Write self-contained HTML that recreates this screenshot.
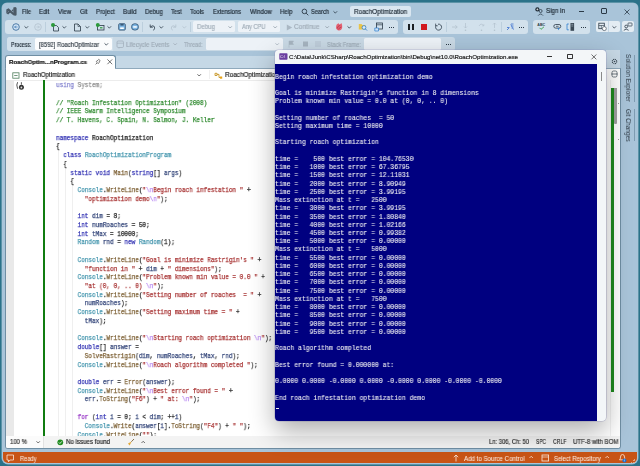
<!DOCTYPE html>
<html><head><meta charset="utf-8">
<style>
*{margin:0;padding:0;box-sizing:border-box}
html,body{width:640px;height:466px;overflow:hidden;background:#2b7289;font-family:"Liberation Sans",sans-serif}
.a{position:absolute}
.t{white-space:pre}
pre,.t{will-change:transform}
.t{-webkit-text-stroke:0.18px currentColor}
svg.a{overflow:visible}
.cl{white-space:pre;will-change:transform;-webkit-text-stroke:0.25px currentColor}
.kl{white-space:pre;will-change:transform;-webkit-text-stroke:0.08px currentColor}
</style></head><body>
<div class="a" style="left:1.8px;top:2.8px;width:636.4px;height:461px;background:#a9c4d9;border-radius:5px 5px 6px 6px;box-shadow:0 0 0 0.5px #8db3c6;"></div>
<svg class="a" style="left:5.6px;top:7px;" width="11" height="9" viewBox="0 0 11 9"><g fill="#4b5966"><path d="M7.3 0.6 L9.2 0 Q10.6 0.2 10.6 1.4 V7.4 Q10.6 8.6 9.2 8.8 L7.3 8.2Z"/><path d="M0.3 2.6 L2.6 1.3 L8.6 6.8 L7.3 8.2Z"/><path d="M0.3 6.2 L2.2 7.4 L5 4.8 L3.8 3.7Z"/><path d="M0.3 2.6 L2.2 3.6 V5.3 L0.3 6.2Z"/><path d="M5.6 3.4 L7.3 1.8 V3.9 L6.7 4.4Z"/></g></svg>
<div class="a t" style="left:22.00px;top:8.81px;font-size:6.6px;line-height:6.6px;color:#1e2a35;font-weight:normal;letter-spacing:0px;font-family:'Liberation Sans',sans-serif;transform:scaleX(0.8464533604198409);transform-origin:0 0;">File</div>
<div class="a t" style="left:39.40px;top:8.81px;font-size:6.6px;line-height:6.6px;color:#1e2a35;font-weight:normal;letter-spacing:0px;font-family:'Liberation Sans',sans-serif;transform:scaleX(0.9057493096959148);transform-origin:0 0;">Edit</div>
<div class="a t" style="left:58.20px;top:8.81px;font-size:6.6px;line-height:6.6px;color:#1e2a35;font-weight:normal;letter-spacing:0px;font-family:'Liberation Sans',sans-serif;transform:scaleX(0.9223273628478085);transform-origin:0 0;">View</div>
<div class="a t" style="left:79.70px;top:8.81px;font-size:6.6px;line-height:6.6px;color:#1e2a35;font-weight:normal;letter-spacing:0px;font-family:'Liberation Sans',sans-serif;transform:scaleX(0.889173424384692);transform-origin:0 0;">Git</div>
<div class="a t" style="left:95.70px;top:8.81px;font-size:6.6px;line-height:6.6px;color:#1e2a35;font-weight:normal;letter-spacing:0px;font-family:'Liberation Sans',sans-serif;transform:scaleX(0.9153228947573419);transform-origin:0 0;">Project</div>
<div class="a t" style="left:122.50px;top:8.81px;font-size:6.6px;line-height:6.6px;color:#1e2a35;font-weight:normal;letter-spacing:0px;font-family:'Liberation Sans',sans-serif;transform:scaleX(0.9197187704381949);transform-origin:0 0;">Build</div>
<div class="a t" style="left:145.00px;top:8.81px;font-size:6.6px;line-height:6.6px;color:#1e2a35;font-weight:normal;letter-spacing:0px;font-family:'Liberation Sans',sans-serif;transform:scaleX(0.9202990200614907);transform-origin:0 0;">Debug</div>
<div class="a t" style="left:171.30px;top:8.81px;font-size:6.6px;line-height:6.6px;color:#1e2a35;font-weight:normal;letter-spacing:0px;font-family:'Liberation Sans',sans-serif;transform:scaleX(0.8839760748157686);transform-origin:0 0;">Test</div>
<div class="a t" style="left:190.00px;top:8.81px;font-size:6.6px;line-height:6.6px;color:#1e2a35;font-weight:normal;letter-spacing:0px;font-family:'Liberation Sans',sans-serif;transform:scaleX(0.9088312430214744);transform-origin:0 0;">Tools</div>
<div class="a t" style="left:212.90px;top:8.81px;font-size:6.6px;line-height:6.6px;color:#1e2a35;font-weight:normal;letter-spacing:0px;font-family:'Liberation Sans',sans-serif;transform:scaleX(0.8672167298495999);transform-origin:0 0;">Extensions</div>
<div class="a t" style="left:249.90px;top:8.81px;font-size:6.6px;line-height:6.6px;color:#1e2a35;font-weight:normal;letter-spacing:0px;font-family:'Liberation Sans',sans-serif;transform:scaleX(0.9280781969739534);transform-origin:0 0;">Window</div>
<div class="a t" style="left:280.00px;top:8.81px;font-size:6.6px;line-height:6.6px;color:#1e2a35;font-weight:normal;letter-spacing:0px;font-family:'Liberation Sans',sans-serif;transform:scaleX(0.9207289226735023);transform-origin:0 0;">Help</div>
<svg class="a" style="left:301px;top:8px;" width="8" height="8" viewBox="0 0 8 8"><circle cx="3.4" cy="3.4" r="2.3" fill="none" stroke="#2b3a47" stroke-width="0.9"/><path d="M5.1 5.1 L7.3 7.3" stroke="#2b3a47" stroke-width="0.9"/></svg>
<div class="a t" style="left:311.00px;top:8.81px;font-size:6.6px;line-height:6.6px;color:#1e2a35;font-weight:normal;letter-spacing:0px;font-family:'Liberation Sans',sans-serif;transform:scaleX(0.8608815426997245);transform-origin:0 0;">Search</div>
<svg class="a" style="left:333.0px;top:10.7px;" width="4.6" height="2.8" viewBox="0 0 4.6 2.8"><path d="M0.5 0.3 L2.3 2.1 L4.1 0.3" fill="none" stroke="#2b3a47" stroke-width="0.8"/></svg>
<div class="a" style="left:350px;top:6px;width:61px;height:11px;background:#d9e6f0;border-radius:2px;"></div>
<div class="a t" style="left:353.80px;top:8.51px;font-size:6.6px;line-height:6.6px;color:#1e2a35;font-weight:normal;letter-spacing:0px;font-family:'Liberation Sans',sans-serif;transform:scaleX(0.9541437098255281);transform-origin:0 0;">RoachOptimization</div>
<svg class="a" style="left:535px;top:7px;" width="10" height="9" viewBox="0 0 10 9"><circle cx="2.4" cy="2.4" r="2.1" fill="#1e2a35"/><path d="M1.4 2.4 H3.4 M2.4 1.4 V3.4" stroke="#fff" stroke-width="0.6"/><circle cx="5.6" cy="4" r="1.5" fill="none" stroke="#2b3a47" stroke-width="0.8"/><path d="M3.2 8.6 Q5.6 5.4 8 8.6" fill="none" stroke="#2b3a47" stroke-width="0.8"/></svg>
<div class="a t" style="left:545.90px;top:8.21px;font-size:6.6px;line-height:6.6px;color:#1e2a35;font-weight:normal;letter-spacing:0px;font-family:'Liberation Sans',sans-serif;transform:scaleX(0.9413956438155262);transform-origin:0 0;">Sign in</div>
<div class="a" style="left:578.5px;top:10.6px;width:5.5px;height:0.8px;background:#2b3a47;"></div>
<div class="a" style="left:601px;top:8px;width:6px;height:6px;background:transparent;border:0.8px solid #2b3a47;border-radius:1px;"></div>
<svg class="a" style="left:623.5px;top:8.5px;" width="6" height="6" viewBox="0 0 6 6"><path d="M0.5 0.5 L5.5 5.5 M5.5 0.5 L0.5 5.5" stroke="#2b3a47" stroke-width="0.8"/></svg>
<div class="a" style="left:5px;top:19.5px;width:393px;height:14.5px;background:#d2e1ec;border-radius:3px;"></div>
<div class="a" style="left:403px;top:19.5px;width:125px;height:14.5px;background:#d2e1ec;border-radius:3px;"></div>
<div class="a" style="left:533px;top:19.5px;width:57px;height:14.5px;background:#d2e1ec;border-radius:3px;"></div>
<div class="a" style="left:596px;top:21px;width:24px;height:11px;background:#e3ecf3;border-radius:2px;"></div>
<div class="a" style="left:608px;top:21px;width:0.6px;height:11px;background:#c5d6e3;"></div>
<div class="a" style="left:622px;top:21px;width:11.5px;height:11px;background:#e3ecf3;border-radius:2px;"></div>
<svg class="a" style="left:11.5px;top:22.5px;" width="8" height="8" viewBox="0 0 8 8"><circle cx="4" cy="4" r="3.3" fill="#d4e6f6" stroke="#3f6f9f" stroke-width="0.9"/><path d="M5.6 4 H2.6 M3.9 2.7 L2.6 4 L3.9 5.3" fill="none" stroke="#2f6fb0" stroke-width="0.7"/></svg>
<svg class="a" style="left:23.5px;top:25.5px;" width="4.6" height="2.8" viewBox="0 0 4.6 2.8"><path d="M0.5 0.3 L2.3 2.1 L4.1 0.3" fill="none" stroke="#2b3a47" stroke-width="0.8"/></svg>
<svg class="a" style="left:33.5px;top:22.5px;" width="8" height="8" viewBox="0 0 8 8"><circle cx="4" cy="4" r="3.3" fill="none" stroke="#b3c2ce" stroke-width="0.8"/><path d="M2.4 4 H5.4 M4.1 2.7 L5.4 4 L4.1 5.3" fill="none" stroke="#b3c2ce" stroke-width="0.7"/></svg>
<div class="a" style="left:45.3px;top:22px;width:0.6px;height:9.5px;background:#bccfdd;"></div>
<svg class="a" style="left:49.5px;top:22px;" width="10" height="10" viewBox="0 0 10 10"><path d="M3.5 3.5 H6.5 L8.5 5.5 V9 H3.5Z" fill="none" stroke="#2b3a47" stroke-width="0.8"/><circle cx="3" cy="3" r="2" fill="#2c9a3c"/></svg>
<svg class="a" style="left:61.5px;top:25.5px;" width="4.6" height="2.8" viewBox="0 0 4.6 2.8"><path d="M0.5 0.3 L2.3 2.1 L4.1 0.3" fill="none" stroke="#2b3a47" stroke-width="0.8"/></svg>
<svg class="a" style="left:72.5px;top:22px;" width="9" height="10" viewBox="0 0 9 10"><path d="M1.5 2 H5 L7.5 4.5 V9 H1.5Z" fill="none" stroke="#2b3a47" stroke-width="0.8"/><path d="M5 2 V4.5 H7.5" fill="none" stroke="#2b3a47" stroke-width="0.6"/></svg>
<svg class="a" style="left:84.5px;top:25.5px;" width="4.6" height="2.8" viewBox="0 0 4.6 2.8"><path d="M0.5 0.3 L2.3 2.1 L4.1 0.3" fill="none" stroke="#2b3a47" stroke-width="0.8"/></svg>
<svg class="a" style="left:94.5px;top:22px;" width="10" height="9" viewBox="0 0 10 9"><rect x="2.5" y="3.5" width="6.5" height="4.5" fill="none" stroke="#2b3a47" stroke-width="0.8"/><circle cx="2.8" cy="3" r="2" fill="#2c9a3c"/><rect x="5" y="5.2" width="2.5" height="1.2" fill="#2c9a3c"/></svg>
<svg class="a" style="left:107.0px;top:25.5px;" width="4.6" height="2.8" viewBox="0 0 4.6 2.8"><path d="M0.5 0.3 L2.3 2.1 L4.1 0.3" fill="none" stroke="#2b3a47" stroke-width="0.8"/></svg>
<svg class="a" style="left:117.5px;top:23px;" width="8" height="8" viewBox="0 0 8 8"><rect x="0.7" y="0.7" width="6.6" height="6.4" rx="1" fill="#7fb8e6" stroke="#3a5a78" stroke-width="0.9"/><rect x="2.2" y="4.4" width="3.6" height="1.6" fill="#ffffff"/><rect x="2.4" y="1" width="3.2" height="1.6" fill="#3a5a78"/></svg>
<svg class="a" style="left:130.5px;top:23px;" width="8" height="8" viewBox="0 0 8 8"><rect x="0.6" y="0.8" width="6.8" height="6.2" rx="2.8" fill="#7fb8e6" stroke="#3a5a78" stroke-width="0.9"/><rect x="2.2" y="3.2" width="3.6" height="1.5" fill="#ffffff"/></svg>
<div class="a" style="left:142.3px;top:22px;width:0.6px;height:9.5px;background:#bccfdd;"></div>
<svg class="a" style="left:147.5px;top:22.5px;" width="8" height="8" viewBox="0 0 8 8"><path d="M2.2 1.5 V4.2 H4.9" fill="none" stroke="#2b3a47" stroke-width="0.8"/><path d="M2.4 4 Q4.5 1.8 6.2 3.4 Q7.5 5 5.5 7.4" fill="none" stroke="#2b3a47" stroke-width="0.8"/></svg>
<svg class="a" style="left:159.0px;top:25.5px;" width="4.6" height="2.8" viewBox="0 0 4.6 2.8"><path d="M0.5 0.3 L2.3 2.1 L4.1 0.3" fill="none" stroke="#2b3a47" stroke-width="0.8"/></svg>
<svg class="a" style="left:169.5px;top:22.5px;" width="8" height="8" viewBox="0 0 8 8"><path d="M5.8 1.5 V4.2 H3.1" fill="none" stroke="#b3c2ce" stroke-width="0.8"/><path d="M5.6 4 Q3.5 1.8 1.8 3.4 Q0.5 5 2.5 7.4" fill="none" stroke="#b3c2ce" stroke-width="0.8"/></svg>
<svg class="a" style="left:181.5px;top:25.5px;" width="4.6" height="2.8" viewBox="0 0 4.6 2.8"><path d="M0.5 0.3 L2.3 2.1 L4.1 0.3" fill="none" stroke="#b3c2ce" stroke-width="0.8"/></svg>
<div class="a" style="left:189.5px;top:22px;width:0.6px;height:9.5px;background:#bccfdd;"></div>
<div class="a" style="left:193px;top:20.5px;width:42px;height:11.3px;background:#edf2f7;border-radius:1.5px;"></div>
<div class="a t" style="left:197.00px;top:23.91px;font-size:6.6px;line-height:6.6px;color:#a1adb8;font-weight:normal;letter-spacing:0px;font-family:'Liberation Sans',sans-serif;transform:scaleX(0.9254403553690965);transform-origin:0 0;">Debug</div>
<svg class="a" style="left:227.5px;top:25.5px;" width="4.4" height="2.7" viewBox="0 0 4.4 2.7"><path d="M0.5 0.3 L2.2 2.0 L3.9 0.3" fill="none" stroke="#8d9aa6" stroke-width="0.8"/></svg>
<div class="a" style="left:238px;top:20.5px;width:42px;height:11.3px;background:#edf2f7;border-radius:1.5px;"></div>
<div class="a t" style="left:242.00px;top:23.91px;font-size:6.6px;line-height:6.6px;color:#a1adb8;font-weight:normal;letter-spacing:0px;font-family:'Liberation Sans',sans-serif;transform:scaleX(0.8659061431434972);transform-origin:0 0;">Any CPU</div>
<svg class="a" style="left:272.5px;top:25.5px;" width="4.4" height="2.7" viewBox="0 0 4.4 2.7"><path d="M0.5 0.3 L2.2 2.0 L3.9 0.3" fill="none" stroke="#8d9aa6" stroke-width="0.8"/></svg>
<svg class="a" style="left:285.5px;top:23.5px;" width="7" height="7" viewBox="0 0 7 7"><path d="M0.8 0.5 L6.2 3.5 L0.8 6.5Z" fill="#aab8c4"/></svg>
<div class="a t" style="left:294.40px;top:23.91px;font-size:6.6px;line-height:6.6px;color:#a1adb8;font-weight:normal;letter-spacing:0px;font-family:'Liberation Sans',sans-serif;transform:scaleX(0.9689702420154582);transform-origin:0 0;">Continue</div>
<svg class="a" style="left:324.5px;top:25.5px;" width="4.4" height="2.7" viewBox="0 0 4.4 2.7"><path d="M0.5 0.3 L2.2 2.0 L3.9 0.3" fill="none" stroke="#8d9aa6" stroke-width="0.8"/></svg>
<svg class="a" style="left:334.8px;top:22.3px;" width="8" height="9" viewBox="0 0 8 9"><path d="M1 5.2 Q0.8 2.4 3.6 1 Q3.4 2.4 4.8 2.6 Q5.8 1.6 6.4 1 Q7.6 3.2 7.2 5.4 Q6.6 8.4 4 8.4 Q1.2 8.2 1 5.2Z" fill="#e46272"/><path d="M2.2 6.6 Q2.6 3.6 5.2 3.4 M3.6 7.4 Q4.2 5.4 6.4 5" fill="none" stroke="#b8324a" stroke-width="0.8"/></svg>
<svg class="a" style="left:346.5px;top:25.5px;" width="4.6" height="2.8" viewBox="0 0 4.6 2.8"><path d="M0.5 0.3 L2.3 2.1 L4.1 0.3" fill="none" stroke="#2b3a47" stroke-width="0.8"/></svg>
<svg class="a" style="left:357.5px;top:22px;" width="10" height="9" viewBox="0 0 10 9"><path d="M0.8 2 H3.5 L4.3 3 H7.5 V7.5 H0.8Z" fill="#e8c44a"/><circle cx="6" cy="5.5" r="1.9" fill="#dcecf8" stroke="#2f7fd1" stroke-width="0.8"/><path d="M7.3 6.8 L9 8.5" stroke="#2f7fd1" stroke-width="0.9"/></svg>
<svg class="a" style="left:373.5px;top:22px;" width="9" height="10" viewBox="0 0 9 10"><rect x="2.5" y="1" width="6" height="6" fill="none" stroke="#2b3a47" stroke-width="0.8"/><path d="M2.5 2.8 H8.5" stroke="#2b3a47" stroke-width="0.7"/><path d="M0.8 6 H4.5 V9 H0.8Z" fill="#cfe3f5" stroke="#2f7fd1" stroke-width="0.7"/></svg>
<div class="a" style="left:389.2px;top:26.8px;width:0.9px;height:0.9px;background:#2b3a47;"></div>
<div class="a" style="left:391.2px;top:26.8px;width:0.9px;height:0.9px;background:#2b3a47;"></div>
<div class="a" style="left:393.2px;top:26.8px;width:0.9px;height:0.9px;background:#2b3a47;"></div>
<div class="a" style="left:408px;top:24px;width:2.2px;height:6px;background:#1b1f23;"></div>
<div class="a" style="left:411.8px;top:24px;width:2.2px;height:6px;background:#1b1f23;"></div>
<div class="a" style="left:420.8px;top:24px;width:6px;height:6px;background:#d1181e;"></div>
<svg class="a" style="left:433.5px;top:22.5px;" width="8" height="8" viewBox="0 0 8 8"><path d="M2.3 2.2 A3 3 0 1 0 4 1.2" fill="none" stroke="#2b3a47" stroke-width="0.8"/><path d="M1.6 0.6 V2.8 H3.8" fill="none" stroke="#2b3a47" stroke-width="0.7"/></svg>
<div class="a" style="left:446px;top:22px;width:0.6px;height:9.5px;background:#bccfdd;"></div>
<svg class="a" style="left:450.5px;top:23px;" width="8" height="8" viewBox="0 0 8 8"><path d="M1 4 H6.2 M4.4 2.2 L6.2 4 L4.4 5.8" fill="none" stroke="#b3c2ce" stroke-width="0.8"/></svg>
<svg class="a" style="left:463px;top:22px;" width="5" height="10" viewBox="0 0 5 10"><path d="M2.5 1 V6 M1 4.5 L2.5 6 L4 4.5" fill="none" stroke="#b3c2ce" stroke-width="0.7"/><circle cx="2.5" cy="8.2" r="0.8" fill="#b3c2ce"/></svg>
<svg class="a" style="left:478px;top:22px;" width="7" height="10" viewBox="0 0 7 10"><path d="M1 4 Q3 0.5 5.5 3.5 M4.2 3.8 H5.8 V2.2" fill="none" stroke="#b3c2ce" stroke-width="0.7"/><circle cx="3.5" cy="8.2" r="0.8" fill="#b3c2ce"/></svg>
<svg class="a" style="left:491.5px;top:22px;" width="5" height="10" viewBox="0 0 5 10"><path d="M2.5 6 V1 M1 2.5 L2.5 1 L4 2.5" fill="none" stroke="#b3c2ce" stroke-width="0.7"/><circle cx="2.5" cy="8.2" r="0.8" fill="#b3c2ce"/></svg>
<div class="a" style="left:501px;top:22px;width:0.6px;height:9.5px;background:#bccfdd;"></div>
<svg class="a" style="left:505.5px;top:22.5px;" width="8.5" height="8" viewBox="0 0 8.5 8"><path d="M1 7 L3.5 4.5 M1 4.5 H3 M5 1 H7.5 M5 3 H7.5 M5.5 5 H7.5" stroke="#3a6fd0" stroke-width="0.8"/><path d="M4.6 1.2 L7.6 6.8" stroke="#3a6fd0" stroke-width="0.6"/></svg>
<div class="a" style="left:519.2px;top:26.8px;width:0.9px;height:0.9px;background:#2b3a47;"></div>
<div class="a" style="left:521.2px;top:26.8px;width:0.9px;height:0.9px;background:#2b3a47;"></div>
<div class="a" style="left:523.2px;top:26.8px;width:0.9px;height:0.9px;background:#2b3a47;"></div>
<svg class="a" style="left:536.5px;top:22px;" width="9.5" height="9" viewBox="0 0 9.5 9"><text x="0.3" y="3.8" font-size="3.6" font-family="Liberation Sans" font-weight="bold" fill="#2b3a47">ABC</text><path d="M2.5 5.8 L4 7.3 L7 4.8" fill="none" stroke="#2c9a3c" stroke-width="0.8"/></svg>
<svg class="a" style="left:552.5px;top:22.5px;" width="9" height="8" viewBox="0 0 9 8"><rect x="0.8" y="1.5" width="7" height="3.6" rx="1.8" fill="none" stroke="#2b3a47" stroke-width="0.8"/><path d="M3 3.3 H5.6" stroke="#2b3a47" stroke-width="0.7"/><path d="M4.5 5 L5.5 7.2 L6.5 5" fill="#2f7fd1"/></svg>
<svg class="a" style="left:565.5px;top:22px;" width="9" height="10" viewBox="0 0 9 10"><path d="M2.8 2 H1 V7.8 H2.8" fill="none" stroke="#2f7fd1" stroke-width="0.8"/><rect x="4.5" y="1" width="3.6" height="7.8" fill="#3b4955"/><path d="M5.3 2.3 H7.3 M5.3 4 H7.3" stroke="#cfdfeb" stroke-width="0.5"/></svg>
<div class="a" style="left:581.2px;top:26.8px;width:0.9px;height:0.9px;background:#2b3a47;"></div>
<div class="a" style="left:583.2px;top:26.8px;width:0.9px;height:0.9px;background:#2b3a47;"></div>
<div class="a" style="left:585.2px;top:26.8px;width:0.9px;height:0.9px;background:#2b3a47;"></div>
<svg class="a" style="left:597.5px;top:22px;" width="9" height="9" viewBox="0 0 9 9"><rect x="0.8" y="1.2" width="5.5" height="5.5" fill="none" stroke="#2b3a47" stroke-width="0.8"/><path d="M0.8 3.5 H6.3 M3.3 3.5 V6.7" stroke="#2b3a47" stroke-width="0.6"/><circle cx="6.3" cy="6.6" r="2" fill="#fff" stroke="#2b3a47" stroke-width="0.6"/></svg>
<svg class="a" style="left:611.5px;top:25.5px;" width="4.6" height="2.8" viewBox="0 0 4.6 2.8"><path d="M0.5 0.3 L2.3 2.1 L4.1 0.3" fill="none" stroke="#2b3a47" stroke-width="0.8"/></svg>
<svg class="a" style="left:623px;top:22px;" width="10" height="9" viewBox="0 0 10 9"><circle cx="3.2" cy="4.5" r="1.4" fill="none" stroke="#2b3a47" stroke-width="0.8"/><path d="M0.8 8.3 Q3.2 5.8 5.6 8.3" fill="none" stroke="#2b3a47" stroke-width="0.8"/><rect x="5" y="1" width="4" height="3" rx="0.5" fill="none" stroke="#2b3a47" stroke-width="0.7"/></svg>
<div class="a" style="left:7px;top:37.3px;width:448px;height:14px;background:#c9d9e5;border-radius:3px;"></div>
<div class="a" style="left:7px;top:37.3px;width:106px;height:14px;background:#d2e1ec;border-radius:3px 0 0 3px;"></div>
<div class="a t" style="left:11.00px;top:41.51px;font-size:6.6px;line-height:6.6px;color:#1e2a35;font-weight:normal;letter-spacing:0px;font-family:'Liberation Sans',sans-serif;transform:scaleX(0.7984731635117239);transform-origin:0 0;">Process:</div>
<div class="a" style="left:35px;top:38px;width:77px;height:12.3px;background:#fbfcfd;border-radius:1.5px;"></div>
<div class="a t" style="left:39.00px;top:41.51px;font-size:6.6px;line-height:6.6px;color:#39434c;font-weight:normal;letter-spacing:0px;font-family:'Liberation Sans',sans-serif;transform:scaleX(0.8889125932247083);transform-origin:0 0;">[8592] RoachOptimizar</div>
<svg class="a" style="left:104.3px;top:43.300000000000004px;" width="4.6" height="2.8" viewBox="0 0 4.6 2.8"><path d="M0.5 0.3 L2.3 2.1 L4.1 0.3" fill="none" stroke="#2b3a47" stroke-width="0.8"/></svg>
<svg class="a" style="left:115.5px;top:39.5px;" width="9" height="9" viewBox="0 0 9 9"><rect x="1" y="1" width="6.5" height="6.5" rx="1.2" fill="none" stroke="#9eabb7" stroke-width="0.7"/><path d="M1 3.2 H7.5 M3 7.5 V8.5" stroke="#9eabb7" stroke-width="0.6"/></svg>
<div class="a t" style="left:126.00px;top:41.51px;font-size:6.6px;line-height:6.6px;color:#9eabb7;font-weight:normal;letter-spacing:0px;font-family:'Liberation Sans',sans-serif;transform:scaleX(0.9100135034261799);transform-origin:0 0;">Lifecycle Events</div>
<svg class="a" style="left:172.5px;top:43.300000000000004px;" width="4.4" height="2.7" viewBox="0 0 4.4 2.7"><path d="M0.5 0.3 L2.2 2.0 L3.9 0.3" fill="none" stroke="#9eabb7" stroke-width="0.8"/></svg>
<div class="a t" style="left:183.50px;top:41.51px;font-size:6.6px;line-height:6.6px;color:#9eabb7;font-weight:normal;letter-spacing:0px;font-family:'Liberation Sans',sans-serif;transform:scaleX(0.8134156422026416);transform-origin:0 0;">Thread:</div>
<div class="a" style="left:206px;top:38px;width:77px;height:12.3px;background:#edf2f7;border-radius:1.5px;"></div>
<svg class="a" style="left:275.0px;top:43.300000000000004px;" width="4.4" height="2.7" viewBox="0 0 4.4 2.7"><path d="M0.5 0.3 L2.2 2.0 L3.9 0.3" fill="none" stroke="#a6b2bd" stroke-width="0.8"/></svg>
<svg class="a" style="left:287.5px;top:40px;" width="7" height="8" viewBox="0 0 7 8"><path d="M1 7.5 V1 H5.5 L4.5 2.8 L5.5 4.5 H1" fill="#a6b4c0" stroke="#a6b4c0" stroke-width="0.5"/></svg>
<svg class="a" style="left:301.5px;top:40px;" width="7" height="8" viewBox="0 0 7 8"><rect x="1" y="1.5" width="5" height="5" fill="#a6b4c0"/></svg>
<svg class="a" style="left:313.5px;top:40px;" width="8" height="8" viewBox="0 0 8 8"><path d="M1 2 H7 M1 4 H7 M1 6 H7" stroke="#a6b4c0" stroke-width="0.6"/></svg>
<div class="a t" style="left:327.00px;top:41.51px;font-size:6.6px;line-height:6.6px;color:#9eabb7;font-weight:normal;letter-spacing:0px;font-family:'Liberation Sans',sans-serif;transform:scaleX(0.8663833083611087);transform-origin:0 0;">Stack Frame:</div>
<div class="a" style="left:364px;top:38px;width:76.5px;height:12.3px;background:#edf2f7;border-radius:1.5px;"></div>
<div class="a" style="left:445.5px;top:43.8px;width:1px;height:1px;background:#2b3a47;"></div>
<div class="a" style="left:447.7px;top:43.8px;width:1px;height:1px;background:#2b3a47;"></div>
<div class="a" style="left:449.9px;top:43.8px;width:1px;height:1px;background:#2b3a47;"></div>
<div class="a" style="left:116px;top:55.5px;width:504px;height:12.8px;background:#c5d8e6;border-top-right-radius:3px;"></div>
<div class="a" style="left:5px;top:55.3px;width:111px;height:13.2px;background:#ffffff;border:0.8px solid #6f8ea3;border-bottom:none;border-radius:3px 3px 0 0;"></div>
<div class="a t" style="left:9.30px;top:58.95px;font-size:6.2px;line-height:6.2px;color:#111;font-weight:bold;letter-spacing:0px;font-family:'Liberation Sans',sans-serif;transform:scaleX(0.9783511655139971);transform-origin:0 0;-webkit-text-stroke:0.2px #111;">RoachOptim...nProgram.cs</div>
<svg class="a" style="left:94.5px;top:58.6px;" width="6" height="6" viewBox="0 0 6 6"><path d="M0.6 5.4 L2 4 M1.4 2.8 L3.2 4.6 L4.1 3.7 L4 2.9 L5.2 1.7 L3.7 0.4 L2.6 1.6 L2 1.6 Z" fill="none" stroke="#333" stroke-width="0.65" stroke-linejoin="round"/></svg>
<svg class="a" style="left:107px;top:59px;" width="5.6" height="5.6" viewBox="0 0 5.6 5.6"><path d="M0.4 0.4 L5.2 5.2 M5.2 0.4 L0.4 5.2" stroke="#2a2a2a" stroke-width="0.65"/></svg>
<div class="a" style="left:5px;top:67.8px;width:615.5px;height:380.8px;background:#ffffff;border:0.8px solid #6f8ea3;border-top-color:#8fa9bc;border-radius:0 0 3px 3px;"></div>
<div class="a" style="left:5.8px;top:67.5px;width:109.4px;height:1.2px;background:#ffffff;"></div>
<div class="a" style="left:5.8px;top:436px;width:613.9px;height:11.8px;background:#f3f3f3;border-radius:0 0 2.5px 2.5px;"></div>
<div class="a" style="left:5.8px;top:436px;width:37.2px;height:11.8px;background:#fbfbfb;border-radius:0 0 0 2.5px;"></div>
<svg class="a" style="left:11.5px;top:71.5px;" width="8" height="7" viewBox="0 0 8 7"><rect x="0.8" y="0.8" width="6.2" height="5.4" fill="none" stroke="#4e7d5c" stroke-width="0.8"/><path d="M2.2 3.5 H5.6" stroke="#4e7d5c" stroke-width="0.8"/></svg>
<div class="a t" style="left:23.00px;top:71.91px;font-size:6.6px;line-height:6.6px;color:#222;font-weight:normal;letter-spacing:0px;font-family:'Liberation Sans',sans-serif;transform:scaleX(0.932621671258035);transform-origin:0 0;">RoachOptimization</div>
<svg class="a" style="left:197.3px;top:73.9px;" width="4.4" height="2.7" viewBox="0 0 4.4 2.7"><path d="M0.5 0.3 L2.2 2.0 L3.9 0.3" fill="none" stroke="#3c3c3c" stroke-width="0.8"/></svg>
<div class="a" style="left:208.8px;top:70px;width:0.6px;height:9px;background:#f0f0f0;"></div>
<svg class="a" style="left:214px;top:71.5px;" width="9" height="8" viewBox="0 0 9 8"><path d="M1 1.3 H3 V3.5 H1Z M3 2.4 H5 V5.5 H6.5" fill="none" stroke="#c28b0c" stroke-width="0.8"/><rect x="6" y="4.5" width="2.2" height="2.2" fill="#e8a317"/></svg>
<div class="a t" style="left:225.30px;top:71.91px;font-size:6.6px;line-height:6.6px;color:#222;font-weight:normal;letter-spacing:0px;font-family:'Liberation Sans',sans-serif;transform:scaleX(0.9695280222396289);transform-origin:0 0;">RoachOptimizatio</div>
<div class="a" style="left:5.8px;top:79.6px;width:600px;height:0.6px;background:#ececec;"></div>
<div class="a" style="left:5.8px;top:80px;width:8.7px;height:356px;background:#e9e9e9;"></div>
<div class="a" style="left:42.5px;top:80px;width:2.8px;height:356px;background:#107c10;"></div>
<svg class="a" style="left:15px;top:81px;" width="11" height="10" viewBox="0 0 11 10"><path d="M2.6 1.2 Q1 3.5 2.6 7.8" fill="none" stroke="#444" stroke-width="0.9"/><circle cx="6.4" cy="6.3" r="2.5" fill="#333"/><path d="M6.4 1.2 V3.6" stroke="#333" stroke-width="0.8"/><circle cx="6.4" cy="6.5" r="0.9" fill="#ddd"/></svg>
<div class="a" style="left:57.90px;top:150.31px;width:0;height:285.69px;border-left:0.5px solid #efefef"></div>
<div class="a" style="left:65.10px;top:167.77px;width:0;height:268.23px;border-left:0.5px solid #efefef"></div>
<div class="a" style="left:72.30px;top:185.23px;width:0;height:250.77px;border-left:0.5px solid #efefef"></div>
<div class="a" style="left:56.3px;top:80px;width:560px;height:355.8px;overflow:hidden"><div class="a" style="left:0;top:0;width:700px;height:400px;font-family:'Liberation Mono',monospace;font-size:7.0px;line-height:7.0px;transform:scaleX(0.8570);transform-origin:0 0"><div class="a cl" style="left:0;top:2.20px"><span style="color:#8585d0">using</span><span style="color:#8f8f8f"> System;</span></div><div class="a cl" style="left:0;top:19.66px"><span style="color:#2f8a2f">// &quot;Roach Infestation Optimization&quot; (2008)</span></div><div class="a cl" style="left:0;top:28.39px"><span style="color:#2f8a2f">// IEEE Swarm Intelligence Symposium</span></div><div class="a cl" style="left:0;top:37.12px"><span style="color:#2f8a2f">// T. Havens, C. Spain, N. Salmon, J. Keller</span></div><div class="a cl" style="left:0;top:54.58px"><span style="color:#3434b4">namespace</span><span style="color:#222222"> RoachOptimization</span></div><div class="a cl" style="left:0;top:63.31px"><span style="color:#222222">{</span></div><div class="a cl" style="left:0;top:72.04px"><span style="color:#222222">  </span><span style="color:#3434b4">class</span><span style="color:#222222"> </span><span style="color:#4596ae">RoachOptimizationProgram</span></div><div class="a cl" style="left:0;top:80.77px"><span style="color:#222222">  {</span></div><div class="a cl" style="left:0;top:89.50px"><span style="color:#222222">    </span><span style="color:#3434b4">static</span><span style="color:#222222"> </span><span style="color:#3434b4">void</span><span style="color:#222222"> </span><span style="color:#7d6034">Main</span><span style="color:#222222">(</span><span style="color:#3434b4">string</span><span style="color:#222222">[] </span><span style="color:#34467a">args</span><span style="color:#222222">)</span></div><div class="a cl" style="left:0;top:98.23px"><span style="color:#222222">    {</span></div><div class="a cl" style="left:0;top:106.96px"><span style="color:#222222">      </span><span style="color:#4596ae">Console</span><span style="color:#222222">.</span><span style="color:#7d6034">WriteLine</span><span style="color:#222222">(</span><span style="color:#a83434">&quot;</span><span style="color:#b98af2">\n</span><span style="color:#a83434">Begin roach infestation &quot;</span><span style="color:#222222"> +</span></div><div class="a cl" style="left:0;top:115.69px"><span style="color:#222222">        </span><span style="color:#a83434">&quot;optimization demo</span><span style="color:#b98af2">\n</span><span style="color:#a83434">&quot;</span><span style="color:#222222">);</span></div><div class="a cl" style="left:0;top:133.15px"><span style="color:#222222">      </span><span style="color:#3434b4">int</span><span style="color:#222222"> </span><span style="color:#34467a">dim</span><span style="color:#222222"> = 8;</span></div><div class="a cl" style="left:0;top:141.88px"><span style="color:#222222">      </span><span style="color:#3434b4">int</span><span style="color:#222222"> </span><span style="color:#34467a">numRoaches</span><span style="color:#222222"> = 50;</span></div><div class="a cl" style="left:0;top:150.61px"><span style="color:#222222">      </span><span style="color:#3434b4">int</span><span style="color:#222222"> </span><span style="color:#34467a">tMax</span><span style="color:#222222"> = 10000;</span></div><div class="a cl" style="left:0;top:159.34px"><span style="color:#222222">      </span><span style="color:#4596ae">Random</span><span style="color:#222222"> </span><span style="color:#34467a">rnd</span><span style="color:#222222"> = </span><span style="color:#3434b4">new</span><span style="color:#222222"> </span><span style="color:#4596ae">Random</span><span style="color:#222222">(1);</span></div><div class="a cl" style="left:0;top:176.80px"><span style="color:#222222">      </span><span style="color:#4596ae">Console</span><span style="color:#222222">.</span><span style="color:#7d6034">WriteLine</span><span style="color:#222222">(</span><span style="color:#a83434">&quot;Goal is minimize Rastrigin&#x27;s &quot;</span><span style="color:#222222"> +</span></div><div class="a cl" style="left:0;top:185.53px"><span style="color:#222222">        </span><span style="color:#a83434">&quot;function in &quot;</span><span style="color:#222222"> + </span><span style="color:#34467a">dim</span><span style="color:#222222"> + </span><span style="color:#a83434">&quot; dimensions&quot;</span><span style="color:#222222">);</span></div><div class="a cl" style="left:0;top:194.26px"><span style="color:#222222">      </span><span style="color:#4596ae">Console</span><span style="color:#222222">.</span><span style="color:#7d6034">WriteLine</span><span style="color:#222222">(</span><span style="color:#a83434">&quot;Problem known min value = 0.0 &quot;</span><span style="color:#222222"> +</span></div><div class="a cl" style="left:0;top:202.99px"><span style="color:#222222">        </span><span style="color:#a83434">&quot;at (0, 0, .. 0) </span><span style="color:#b98af2">\n</span><span style="color:#a83434">&quot;</span><span style="color:#222222">);</span></div><div class="a cl" style="left:0;top:211.72px"><span style="color:#222222">      </span><span style="color:#4596ae">Console</span><span style="color:#222222">.</span><span style="color:#7d6034">WriteLine</span><span style="color:#222222">(</span><span style="color:#a83434">&quot;Setting number of roaches  = &quot;</span><span style="color:#222222"> +</span></div><div class="a cl" style="left:0;top:220.45px"><span style="color:#222222">        </span><span style="color:#34467a">numRoaches</span><span style="color:#222222">);</span></div><div class="a cl" style="left:0;top:229.18px"><span style="color:#222222">      </span><span style="color:#4596ae">Console</span><span style="color:#222222">.</span><span style="color:#7d6034">WriteLine</span><span style="color:#222222">(</span><span style="color:#a83434">&quot;Setting maximum time = &quot;</span><span style="color:#222222"> +</span></div><div class="a cl" style="left:0;top:237.91px"><span style="color:#222222">        </span><span style="color:#34467a">tMax</span><span style="color:#222222">);</span></div><div class="a cl" style="left:0;top:255.37px"><span style="color:#222222">      </span><span style="color:#4596ae">Console</span><span style="color:#222222">.</span><span style="color:#7d6034">WriteLine</span><span style="color:#222222">(</span><span style="color:#a83434">&quot;</span><span style="color:#b98af2">\n</span><span style="color:#a83434">Starting roach optimization </span><span style="color:#b98af2">\n</span><span style="color:#a83434">&quot;</span><span style="color:#222222">);</span></div><div class="a cl" style="left:0;top:264.10px"><span style="color:#222222">      </span><span style="color:#3434b4">double</span><span style="color:#222222">[] </span><span style="color:#34467a">answer</span><span style="color:#222222"> =</span></div><div class="a cl" style="left:0;top:272.83px"><span style="color:#222222">        </span><span style="color:#7d6034">SolveRastrigin</span><span style="color:#222222">(</span><span style="color:#34467a">dim</span><span style="color:#222222">, </span><span style="color:#34467a">numRoaches</span><span style="color:#222222">, </span><span style="color:#34467a">tMax</span><span style="color:#222222">, </span><span style="color:#34467a">rnd</span><span style="color:#222222">);</span></div><div class="a cl" style="left:0;top:281.56px"><span style="color:#222222">      </span><span style="color:#4596ae">Console</span><span style="color:#222222">.</span><span style="color:#7d6034">WriteLine</span><span style="color:#222222">(</span><span style="color:#a83434">&quot;</span><span style="color:#b98af2">\n</span><span style="color:#a83434">Roach algorithm completed &quot;</span><span style="color:#222222">);</span></div><div class="a cl" style="left:0;top:299.02px"><span style="color:#222222">      </span><span style="color:#3434b4">double</span><span style="color:#222222"> </span><span style="color:#34467a">err</span><span style="color:#222222"> = </span><span style="color:#7d6034">Error</span><span style="color:#222222">(</span><span style="color:#34467a">answer</span><span style="color:#222222">);</span></div><div class="a cl" style="left:0;top:307.75px"><span style="color:#222222">      </span><span style="color:#4596ae">Console</span><span style="color:#222222">.</span><span style="color:#7d6034">WriteLine</span><span style="color:#222222">(</span><span style="color:#a83434">&quot;</span><span style="color:#b98af2">\n</span><span style="color:#a83434">Best error found = &quot;</span><span style="color:#222222"> +</span></div><div class="a cl" style="left:0;top:316.48px"><span style="color:#222222">        </span><span style="color:#34467a">err</span><span style="color:#222222">.</span><span style="color:#7d6034">ToString</span><span style="color:#222222">(</span><span style="color:#a83434">&quot;F6&quot;</span><span style="color:#222222">) + </span><span style="color:#a83434">&quot; at: </span><span style="color:#b98af2">\n</span><span style="color:#a83434">&quot;</span><span style="color:#222222">);</span></div><div class="a cl" style="left:0;top:333.94px"><span style="color:#222222">      </span><span style="color:#9a3cc8">for</span><span style="color:#222222"> (</span><span style="color:#3434b4">int</span><span style="color:#222222"> </span><span style="color:#34467a">i</span><span style="color:#222222"> = 0; </span><span style="color:#34467a">i</span><span style="color:#222222"> &lt; </span><span style="color:#34467a">dim</span><span style="color:#222222">; ++</span><span style="color:#34467a">i</span><span style="color:#222222">)</span></div><div class="a cl" style="left:0;top:342.67px"><span style="color:#222222">        </span><span style="color:#4596ae">Console</span><span style="color:#222222">.</span><span style="color:#7d6034">Write</span><span style="color:#222222">(</span><span style="color:#34467a">answer</span><span style="color:#222222">[</span><span style="color:#34467a">i</span><span style="color:#222222">].</span><span style="color:#7d6034">ToString</span><span style="color:#222222">(</span><span style="color:#a83434">&quot;F4&quot;</span><span style="color:#222222">) + </span><span style="color:#a83434">&quot; &quot;</span><span style="color:#222222">);</span></div><div class="a cl" style="left:0;top:352.00px"><span style="color:#222222">      </span><span style="color:#4596ae">Console</span><span style="color:#222222">.</span><span style="color:#7d6034">WriteLine</span><span style="color:#222222">(</span><span style="color:#a83434">&quot;&quot;</span><span style="color:#222222">);</span></div></div></div>
<div class="a" style="left:606px;top:50px;width:14px;height:18px;background:#c7d8e5;"></div>
<svg class="a" style="left:610.5px;top:57.5px;" width="7" height="7" viewBox="0 0 7 7"><circle cx="3.5" cy="3.5" r="2.2" fill="none" stroke="#3b4955" stroke-width="1.1" stroke-dasharray="1 0.6"/><circle cx="3.5" cy="3.5" r="0.8" fill="#3b4955"/></svg>
<svg class="a" style="left:611px;top:69.5px;" width="7" height="8" viewBox="0 0 7 8"><rect x="1" y="1" width="5" height="6" rx="1.5" fill="none" stroke="#3b4955" stroke-width="0.7"/><path d="M0.3 4 H6.7" stroke="#3b4955" stroke-width="0.7"/></svg>
<div class="a" style="left:610px;top:80px;width:0.6px;height:356px;background:#f2f2f2;"></div>
<div class="a" style="left:611.2px;top:88px;width:2.7px;height:303.5px;background:#1e8a1e;"></div>
<div class="a" style="left:614.2px;top:88px;width:2.8px;height:35.5px;background:#a0a0a0;border-radius:0 0 1px 1px;"></div>
<div class="a" style="left:618.3px;top:102.5px;width:1.2px;height:1.2px;background:#9a9a9a;"></div>
<div class="a" style="left:618.3px;top:138.5px;width:1.2px;height:1.2px;background:#9a9a9a;"></div>
<div class="a t" style="left:624.2px;top:54.30px;font-size:6.6px;line-height:6.6px;color:#2e3a45;-webkit-text-stroke:0;writing-mode:vertical-rl;transform:scaleY(0.9531);transform-origin:0 0;font-family:'Liberation Sans',sans-serif">Solution Explorer</div>
<div class="a t" style="left:624.2px;top:108.70px;font-size:6.6px;line-height:6.6px;color:#2e3a45;-webkit-text-stroke:0;writing-mode:vertical-rl;transform:scaleY(0.8940);transform-origin:0 0;font-family:'Liberation Sans',sans-serif">Git Changes</div>
<div class="a" style="left:634.2px;top:55px;width:0.8px;height:47px;background:#7d9bb1;"></div>
<div class="a" style="left:634.2px;top:108.5px;width:0.8px;height:32.5px;background:#7d9bb1;"></div>
<div class="a t" style="left:10.00px;top:439.41px;font-size:6.6px;line-height:6.6px;color:#333;font-weight:normal;letter-spacing:0px;font-family:'Liberation Sans',sans-serif;transform:scaleX(0.9085564641120197);transform-origin:0 0;">100 %</div>
<svg class="a" style="left:36.3px;top:441.0px;" width="4.4" height="2.7" viewBox="0 0 4.4 2.7"><path d="M0.5 0.3 L2.2 2.0 L3.9 0.3" fill="none" stroke="#444" stroke-width="0.8"/></svg>
<div class="a" style="left:43px;top:436px;width:0.6px;height:11.800000000000011px;background:#e2e2e2;"></div>
<svg class="a" style="left:56.5px;top:438.5px;" width="7" height="7" viewBox="0 0 7 7"><circle cx="3.3" cy="3.3" r="2.9" fill="#1e8a1e"/><path d="M1.8 3.4 L2.9 4.5 L4.9 2.3" fill="none" stroke="#fff" stroke-width="0.8"/></svg>
<div class="a t" style="left:65.70px;top:439.21px;font-size:6.6px;line-height:6.6px;color:#1e1e1e;font-weight:normal;letter-spacing:0px;font-family:'Liberation Sans',sans-serif;transform:scaleX(0.9317833191769881);transform-origin:0 0;">No issues found</div>
<svg class="a" style="left:126.5px;top:438px;" width="8" height="8" viewBox="0 0 8 8"><path d="M7 1 L4.3 3.8" stroke="#6b4c1e" stroke-width="0.8"/><path d="M4.6 3.4 L1 5.5 L2.6 7.4 Z" fill="#e2a93c"/></svg>
<svg class="a" style="left:140.5px;top:440.5px;" width="4.4" height="2.7" viewBox="0 0 4.4 2.7"><path d="M0.5 2.0 L2.2 0.3 L3.9 2.0" fill="none" stroke="#444" stroke-width="0.8"/></svg>
<div class="a t" style="left:488.80px;top:439.21px;font-size:6.6px;line-height:6.6px;color:#333;font-weight:normal;letter-spacing:0px;font-family:'Liberation Sans',sans-serif;transform:scaleX(0.8863126733849167);transform-origin:0 0;">Ln: 306, Ch: 50</div>
<div class="a t" style="left:536.00px;top:439.21px;font-size:6.6px;line-height:6.6px;color:#333;font-weight:normal;letter-spacing:0px;font-family:'Liberation Sans',sans-serif;transform:scaleX(0.7369413984199976);transform-origin:0 0;">SPC</div>
<div class="a t" style="left:552.50px;top:439.21px;font-size:6.6px;line-height:6.6px;color:#333;font-weight:normal;letter-spacing:0px;font-family:'Liberation Sans',sans-serif;transform:scaleX(0.7833989067233035);transform-origin:0 0;">CRLF</div>
<div class="a t" style="left:572.50px;top:439.21px;font-size:6.6px;line-height:6.6px;color:#333;font-weight:normal;letter-spacing:0px;font-family:'Liberation Sans',sans-serif;transform:scaleX(0.92598245721147);transform-origin:0 0;">UTF-8 with BOM</div>
<div class="a" style="left:2.8px;top:452px;width:634.6px;height:11.4px;background:#c85416;border-radius:0 0 5px 5px;"></div>
<svg class="a" style="left:5.5px;top:453.5px;" width="9" height="8.5" viewBox="0 0 9 8.5"><path d="M1 1 H7.5 V6 H4 L2.5 7.8 V6 H1Z" fill="none" stroke="#fbe9dc" stroke-width="0.8"/></svg>
<div class="a t" style="left:19.50px;top:456.21px;font-size:6.6px;line-height:6.6px;color:#fbe9dc;font-weight:normal;letter-spacing:0px;font-family:'Liberation Sans',sans-serif;transform:scaleX(0.8647526807333102);transform-origin:0 0;-webkit-text-stroke:0.05px currentColor;">Ready</div>
<svg class="a" style="left:452.5px;top:453.5px;" width="6" height="8" viewBox="0 0 6 8"><path d="M3 7.5 V1 M0.8 3.2 L3 1 L5.2 3.2" fill="none" stroke="#fbe9dc" stroke-width="0.8"/></svg>
<div class="a t" style="left:464.00px;top:456.21px;font-size:6.6px;line-height:6.6px;color:#fbe9dc;font-weight:normal;letter-spacing:0px;font-family:'Liberation Sans',sans-serif;transform:scaleX(0.9316664972727581);transform-origin:0 0;-webkit-text-stroke:0.05px currentColor;">Add to Source Control</div>
<svg class="a" style="left:529.3px;top:455.9px;" width="4.4" height="2.7" viewBox="0 0 4.4 2.7"><path d="M0.5 2.0 L2.2 0.3 L3.9 2.0" fill="none" stroke="#fbe9dc" stroke-width="0.8"/></svg>
<svg class="a" style="left:540.5px;top:453.5px;" width="9" height="8" viewBox="0 0 9 8"><rect x="1" y="1" width="6.6" height="6" fill="none" stroke="#fbe9dc" stroke-width="0.8"/><path d="M1 3 H7.6" stroke="#fbe9dc" stroke-width="0.7"/></svg>
<div class="a t" style="left:553.80px;top:456.21px;font-size:6.6px;line-height:6.6px;color:#fbe9dc;font-weight:normal;letter-spacing:0px;font-family:'Liberation Sans',sans-serif;transform:scaleX(0.903832248734635);transform-origin:0 0;-webkit-text-stroke:0.05px currentColor;">Select Repository</div>
<svg class="a" style="left:605.3px;top:455.9px;" width="4.4" height="2.7" viewBox="0 0 4.4 2.7"><path d="M0.5 2.0 L2.2 0.3 L3.9 2.0" fill="none" stroke="#fbe9dc" stroke-width="0.8"/></svg>
<svg class="a" style="left:618px;top:453px;" width="9" height="10" viewBox="0 0 9 10"><path d="M1.5 6.8 Q2.5 6 2.5 4 Q2.5 1.5 4.5 1.5 Q6.5 1.5 6.5 4 Q6.5 6 7.5 6.8Z" fill="none" stroke="#fbe9dc" stroke-width="0.8"/><circle cx="6.4" cy="7.4" r="2" fill="#1f6fcf"/><path d="M6.4 6.5 V8.4" stroke="#fff" stroke-width="0.5"/></svg>
<div class="a" style="left:634.2px;top:458.6px;width:0.8px;height:0.8px;background:#e8a27a;"></div>
<div class="a" style="left:632.6px;top:460.2px;width:0.8px;height:0.8px;background:#e8a27a;"></div>
<div class="a" style="left:634.2px;top:460.2px;width:0.8px;height:0.8px;background:#e8a27a;"></div>
<div class="a" style="left:631px;top:461.8px;width:0.8px;height:0.8px;background:#e8a27a;"></div>
<div class="a" style="left:632.6px;top:461.8px;width:0.8px;height:0.8px;background:#e8a27a;"></div>
<div class="a" style="left:634.2px;top:461.8px;width:0.8px;height:0.8px;background:#e8a27a;"></div>
<div class="a" style="left:275px;top:49.8px;width:331px;height:371.3px;background:#f3f6f8;border-radius:3.5px 3.5px 4px 4px;box-shadow:0 10px 26px 0 rgba(0,0,0,.32),0 0 0 0.6px rgba(150,150,200,.5)"></div>
<div class="a" style="left:275px;top:64px;width:322px;height:357px;background:#000080;border-radius:0 0 0 4px;"></div>
<svg class="a" style="left:278.5px;top:52.5px;" width="9" height="7" viewBox="0 0 9 7"><rect x="0.3" y="0.3" width="8.2" height="6.4" rx="0.8" fill="#6b3fa0"/><text x="1.1" y="5.2" font-size="4" font-family="Liberation Sans" fill="#fff">C:\</text></svg>
<div class="a t" style="left:289.40px;top:54.96px;font-size:5.6px;line-height:5.6px;color:#1b1b1b;font-weight:normal;letter-spacing:0px;font-family:'Liberation Sans',sans-serif;transform:scaleX(1.0994691093772777);transform-origin:0 0;">C:\Data\Junk\CSharp\RoachOptimization\bin\Debug\net10.0\RoachOptimization.exe</div>
<div class="a" style="left:546.5px;top:56.3px;width:5.5px;height:0.7px;background:#333;"></div>
<div class="a" style="left:567px;top:53.5px;width:5.5px;height:5.5px;background:transparent;border:0.7px solid #333;border-radius:0.8px;"></div>
<svg class="a" style="left:591px;top:53.8px;" width="6" height="6" viewBox="0 0 6 6"><path d="M0.5 0.5 L5.3 5.3 M5.3 0.5 L0.5 5.3" stroke="#333" stroke-width="0.7"/></svg>
<div class="a" style="left:601.2px;top:72px;width:0.9px;height:9px;background:#8a8a8a;"></div>
<div class="a" style="left:275.0px;top:64px;width:322px;height:357px;overflow:hidden"><div class="a" style="left:0;top:0;width:400px;height:357px;font-family:'Liberation Mono',monospace;font-size:6.9px;line-height:6.9px;color:#f4f4f4;transform:scaleX(0.9298);transform-origin:0 0;-webkit-text-stroke:0.12px currentColor"><div class="a kl" style="left:0;top:9.60px">Begin roach infestation optimization demo</div><div class="a kl" style="left:0;top:26.06px">Goal is minimize Rastrigin&#x27;s function in 8 dimensions</div><div class="a kl" style="left:0;top:34.29px">Problem known min value = 0.0 at (0, 0, .. 0)</div><div class="a kl" style="left:0;top:50.75px">Setting number of roaches  = 50</div><div class="a kl" style="left:0;top:58.98px">Setting maximum time = 10000</div><div class="a kl" style="left:0;top:75.44px">Starting roach optimization</div><div class="a kl" style="left:0;top:91.90px">time =    500 best error = 104.76530</div><div class="a kl" style="left:0;top:100.13px">time =   1000 best error = 67.36795</div><div class="a kl" style="left:0;top:108.36px">time =   1500 best error = 12.11031</div><div class="a kl" style="left:0;top:116.59px">time =   2000 best error = 8.90949</div><div class="a kl" style="left:0;top:124.82px">time =   2500 best error = 3.99195</div><div class="a kl" style="left:0;top:133.05px">Mass extinction at t =   2500</div><div class="a kl" style="left:0;top:141.28px">time =   3000 best error = 3.99195</div><div class="a kl" style="left:0;top:149.51px">time =   3500 best error = 1.80840</div><div class="a kl" style="left:0;top:157.74px">time =   4000 best error = 1.02166</div><div class="a kl" style="left:0;top:165.97px">time =   4500 best error = 0.99382</div><div class="a kl" style="left:0;top:174.20px">time =   5000 best error = 0.00000</div><div class="a kl" style="left:0;top:182.43px">Mass extinction at t =   5000</div><div class="a kl" style="left:0;top:190.66px">time =   5500 best error = 0.00000</div><div class="a kl" style="left:0;top:198.89px">time =   6000 best error = 0.00000</div><div class="a kl" style="left:0;top:207.12px">time =   6500 best error = 0.00000</div><div class="a kl" style="left:0;top:215.35px">time =   7000 best error = 0.00000</div><div class="a kl" style="left:0;top:223.58px">time =   7500 best error = 0.00000</div><div class="a kl" style="left:0;top:231.81px">Mass extinction at t =   7500</div><div class="a kl" style="left:0;top:240.04px">time =   8000 best error = 0.00000</div><div class="a kl" style="left:0;top:248.27px">time =   8500 best error = 0.00000</div><div class="a kl" style="left:0;top:256.50px">time =   9000 best error = 0.00000</div><div class="a kl" style="left:0;top:264.73px">time =   9500 best error = 0.00000</div><div class="a kl" style="left:0;top:281.19px">Roach algorithm completed</div><div class="a kl" style="left:0;top:297.65px">Best error found = 0.000000 at:</div><div class="a kl" style="left:0;top:314.11px">0.0000 0.0000 -0.0000 0.0000 -0.0000 0.0000 -0.0000 -0.0000</div><div class="a kl" style="left:0;top:330.57px">End roach infestation optimization demo</div></div></div>
<div class="a" style="left:275.5px;top:407.6px;width:3.8px;height:1.6px;background:#f0f0f0;"></div>
</body></html>
